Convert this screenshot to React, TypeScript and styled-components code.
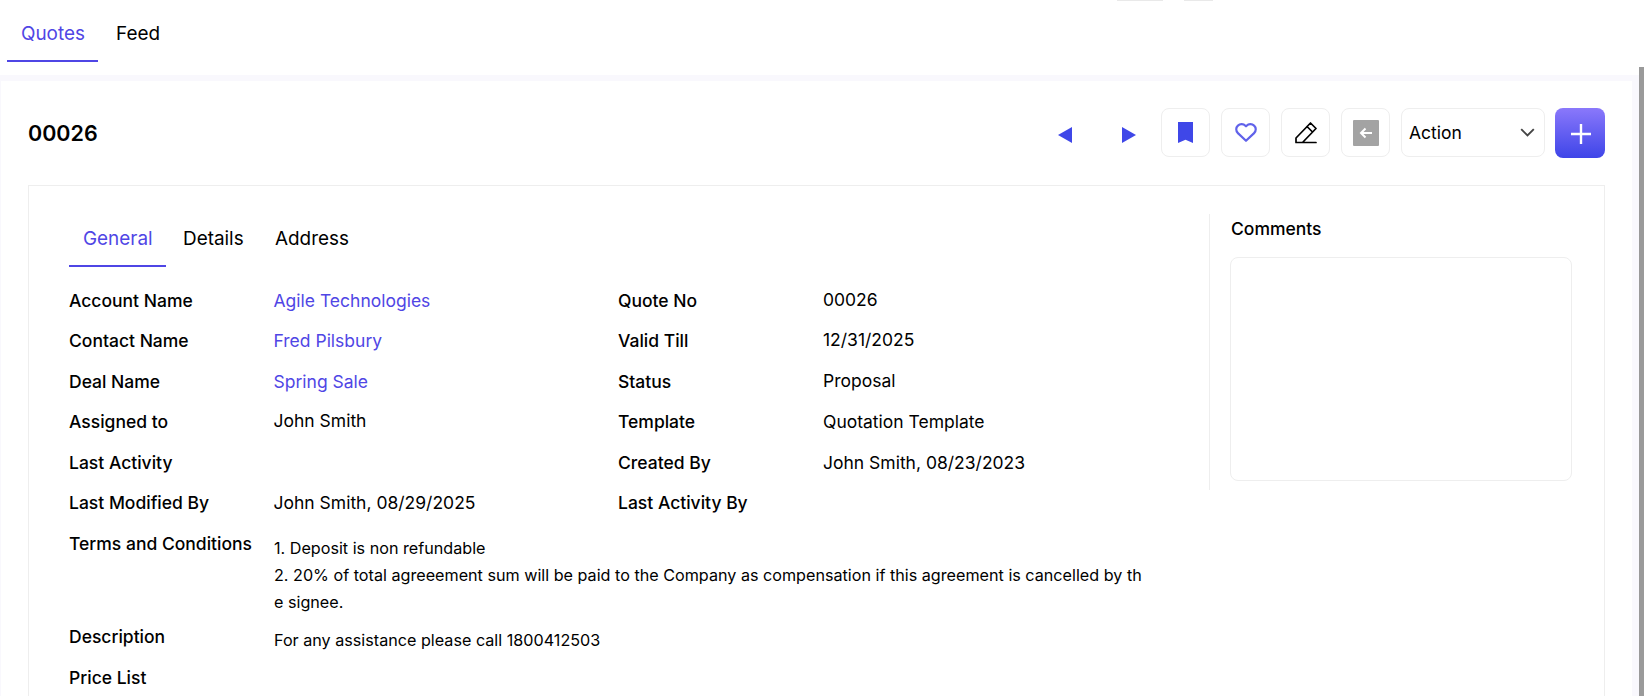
import React from "react";
import styled, { createGlobalStyle } from "styled-components";

const Global = createGlobalStyle`
  html, body { margin: 0; padding: 0; height: 696px; overflow: hidden; background: #fff; }
  body { font-family: Inter, "Liberation Sans", sans-serif; color: #000; }
  * { box-sizing: border-box; }
`;
const Page = styled.div`
  position: relative;
  height: 696px;
  overflow: hidden;
  background: #fff;
`;
const TopStubs = styled.div`
  position: absolute;
  top: 0;
  left: 1117px;
  display: flex;
  gap: 21px;
`;
const Stub = styled.span<{ $w: number }>`
  display: block;
  width: ${(p) => p.$w}px;
  height: 1px;
  background: #e9e9e9;
`;
const TopTabs = styled.nav`
  height: 75px;
  padding: 13px 0 0 7px;
  display: flex;
  align-items: flex-start;
`;
const TopTab = styled.div<{ $active?: boolean }>`
  height: 49px;
  width: ${(p) => (p.$active ? "91px" : "auto")};
  padding: 0 14px;
  margin-left: ${(p) => (p.$active ? "0" : "4px")};
  font-size: 18.9px;
  line-height: 42px;
  color: ${(p) => (p.$active ? "#5046e5" : "#000")};
  border-bottom: 2px solid ${(p) => (p.$active ? "#4f46e5" : "transparent")};
`;
const Shell = styled.div`
  background: #f9f8fd;
  padding: 6px 12px 0 1px;
  height: 621px;
`;
const Main = styled.main`
  background: #fff;
  height: 100%;
  padding: 27px 27px 0 27px;
`;
const Header = styled.header`
  display: flex;
  align-items: center;
  height: 50px;
`;
const Title = styled.h1`
  margin: 0;
  flex: 1;
  font-size: 21.5px;
  font-weight: 600;
`;
const Toolbar = styled.div`
  display: flex;
  align-items: flex-start;
  gap: 11px;
`;
const Arrow = styled.button<{ $mr: number }>`
  width: 14px;
  height: 49px;
  border: 0;
  padding: 4px 0 0;
  background: none;
  display: flex;
  align-items: center;
  justify-content: center;
  margin-right: ${(p) => p.$mr}px;
`;
const IconButton = styled.button`
  width: 49px;
  height: 49px;
  padding: 0;
  background: #fff;
  border: 1px solid #eeeeee;
  border-radius: 8px;
  display: flex;
  align-items: center;
  justify-content: center;
`;
const ActionSelect = styled.div`
  width: 144px;
  height: 49px;
  border: 1px solid #eeeeee;
  border-radius: 8px;
  padding: 0 9px 0 7px;
  margin-right: -1px;
  display: flex;
  align-items: center;
  justify-content: space-between;
  font-size: 17.5px;
`;
const AddButton = styled.button`
  width: 50px;
  height: 50px;
  border: 0;
  padding: 2px 0 0 2px;
  border-radius: 8px;
  background: linear-gradient(180deg, #8a78fb 0%, #3e45e8 100%);
  display: flex;
  align-items: center;
  justify-content: center;
`;
const Card = styled.section`
  margin-top: 27px;
  border: 1px solid #eeeeee;
  height: 600px;
  padding: 28px 32px 0 40px;
  display: flex;
  align-items: flex-start;
`;
const FormArea = styled.div`
  width: 1140px;
`;
const FormTabs = styled.div`
  display: flex;
  height: 53px;
`;
const FormTab = styled.div<{ $active?: boolean; $w: number }>`
  width: ${(p) => p.$w}px;
  padding-left: ${(p) => (p.$active ? 14 : 17)}px;
  font-size: 18.9px;
  line-height: 50px;
  color: ${(p) => (p.$active ? "#5046e5" : "#000")};
  border-bottom: 2px solid ${(p) => (p.$active ? "#4f46e5" : "transparent")};
`;
const Grid = styled.div`
  padding-top: 13px;
  display: grid;
  grid-template-columns: 204.5px 344.5px 205px 1fr;
  grid-auto-rows: 40.5px;
  align-items: center;
`;
const Label = styled.div`
  font-size: 17.5px;
  font-weight: 500;
`;
const Value = styled.div<{ $raised?: boolean }>`
  font-size: 17.5px;
  margin-top: ${(p) => (p.$raised ? "-2px" : "0")};
`;
const LinkValue = styled(Value)`
  color: #5046e5;
`;
const Terms = styled.div`
  margin-top: 1px;
  display: grid;
  grid-template-columns: 205px 872px;
  font-size: 16.16px;
  line-height: 27px;
`;
const TermsLabel = styled(Label)`
  line-height: 20px;
  padding-top: 10px;
`;
const TermsText = styled.div`
  word-break: break-all;
  padding-top: 11px;
`;
const BottomRow = styled.div`
  display: grid;
  grid-template-columns: 205px 872px;
  align-items: center;
  font-size: 16.16px;
  height: 41px;
`;
const BottomValue = styled.div`
  padding-top: 7px;
`;
const Side = styled.aside`
  border-left: 1px solid #eeeeee;
  height: 276px;
  padding-left: 20px;
  width: 363px;
  flex-shrink: 0;
`;
const SideTitle = styled.div`
  font-size: 17.5px;
  font-weight: 500;
  line-height: 30px;
  padding-left: 1px;
`;
const CommentBox = styled.div`
  margin-top: 13px;
  height: 224px;
  border: 1px solid #eeeeee;
  border-radius: 8px;
`;
const Scrollbar = styled.div`
  position: absolute;
  right: 0;
  top: 67px;
  bottom: 0;
  width: 5px;
  background: #9a9a9a;
`;
const LavenderEdge = styled.div`
  position: absolute;
  right: 5px;
  top: 75px;
  bottom: 0;
  width: 7px;
  background: #f9f8fd;
`;

const rows: [string, React.ReactNode, string, string, boolean][] = [
  ["Account Name", <LinkValue key="a">Agile Technologies</LinkValue>, "Quote No", "00026", true],
  ["Contact Name", <LinkValue key="b">Fred Pilsbury</LinkValue>, "Valid Till", "12/31/2025", true],
  ["Deal Name", <LinkValue key="c">Spring Sale</LinkValue>, "Status", "Proposal", true],
  ["Assigned to", <Value key="d" $raised>John Smith</Value>, "Template", "Quotation Template", false],
  ["Last Activity", <Value key="e" />, "Created By", "John Smith, 08/23/2023", false],
  ["Last Modified By", <Value key="f">John Smith, 08/29/2025</Value>, "Last Activity By", "", false],
];

export default function App() {
  return (
    <Page>
      <Global />
      <TopStubs>
        <Stub $w={46} />
        <Stub $w={29} />
      </TopStubs>
      <TopTabs>
        <TopTab $active>Quotes</TopTab>
        <TopTab>Feed</TopTab>
      </TopTabs>
      <Shell>
        <Main>
          <Header>
            <Title>00026</Title>
            <Toolbar>
              <Arrow $mr={39} aria-label="Previous">
                <svg width="14" height="16" viewBox="0 0 14 16"><path d="M14 0v16L0 8z" fill="#3f47e8" /></svg>
              </Arrow>
              <Arrow $mr={14} aria-label="Next">
                <svg width="14" height="16" viewBox="0 0 14 16"><path d="M0 0v16l14-8z" fill="#3f47e8" /></svg>
              </Arrow>
              <IconButton aria-label="Bookmark">
                <svg width="15" height="21" viewBox="0 0 15 21"><path d="M0 0h15v21l-7.5-3.2L0 21z" fill="#3f47e8" /></svg>
              </IconButton>
              <IconButton aria-label="Favourite">
                <svg width="24" height="21" viewBox="-1 -1 24 21"><path d="M11 17.8 2.9 10.1C.7 8 .7 4.6 2.9 2.6 5 .6 8.4.7 10.4 2.7l.6.6.6-.6c2-2 5.4-2.1 7.5-.1 2.2 2 2.2 5.4 0 7.5z" fill="none" stroke="#6062ea" strokeWidth="2.2" strokeLinejoin="round" /></svg>
              </IconButton>
              <IconButton aria-label="Edit">
                <svg width="22" height="22" viewBox="0 0 22 22" fill="none" stroke="#000" strokeWidth="1.7" strokeLinejoin="round" strokeLinecap="round"><path d="M1 20.5V16L15.5 1 21 6.5 7.5 20.5zM12 4.5 17.5 10M7.5 20.5H21" /></svg>
              </IconButton>
              <IconButton aria-label="Back">
                <svg width="26" height="26" viewBox="0 0 26 26"><rect width="26" height="26" rx="1" fill="#a3a3a3" /><path d="M19 13H8M12.5 8.5 8 13l4.5 4.5" fill="none" stroke="#fff" strokeWidth="2" /></svg>
              </IconButton>
              <ActionSelect>
                Action
                <svg width="15" height="9" viewBox="0 0 15 9"><path d="M1.2 1.2 7.5 7.5l6.3-6.3" fill="none" stroke="#444" strokeWidth="1.9" /></svg>
              </ActionSelect>
              <AddButton aria-label="Add">
                <svg width="20" height="20" viewBox="0 0 20 20"><path d="M10 0v20M0 10h20" stroke="#fff" strokeWidth="2.4" /></svg>
              </AddButton>
            </Toolbar>
          </Header>
          <Card>
            <FormArea>
              <FormTabs>
                <FormTab $active $w={97}>General</FormTab>
                <FormTab $w={92}>Details</FormTab>
                <FormTab $w={100}>Address</FormTab>
              </FormTabs>
              <Grid>
                {rows.map(([a, b, c, d, raised]) => (
                  <React.Fragment key={a}>
                    <Label>{a}</Label>
                    {b}
                    <Label>{c}</Label>
                    <Value $raised={raised}>{d}</Value>
                  </React.Fragment>
                ))}
              </Grid>
              <Terms>
                <TermsLabel>Terms and Conditions</TermsLabel>
                <TermsText>
                  1. Deposit is non refundable
                  <br />
                  2. 20% of total agreeement sum will be paid to the Company as compensation if this agreement is cancelled by the signee.
                </TermsText>
              </Terms>
              <BottomRow>
                <Label>Description</Label>
                <BottomValue>For any assistance please call 1800412503</BottomValue>
              </BottomRow>
              <BottomRow>
                <Label>Price List</Label>
                <div />
              </BottomRow>
            </FormArea>
            <Side>
              <SideTitle>Comments</SideTitle>
              <CommentBox />
            </Side>
          </Card>
        </Main>
      </Shell>
      <LavenderEdge />
      <Scrollbar />
    </Page>
  );
}
